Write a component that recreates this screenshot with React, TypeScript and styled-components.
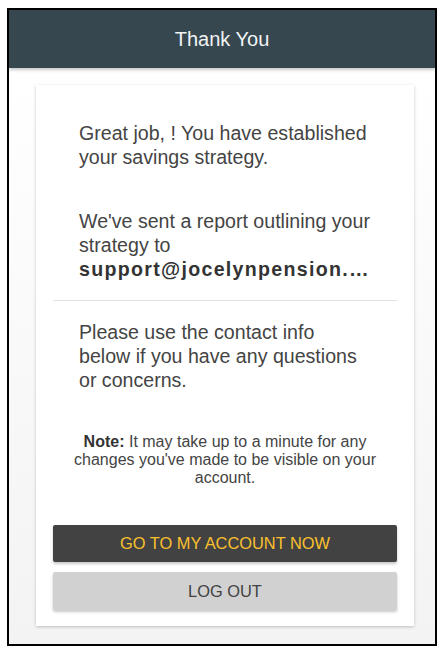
import React from 'react';
import styled, { createGlobalStyle } from 'styled-components';

const GlobalStyle = createGlobalStyle`
  body {
    margin: 0;
    background: #fff;
    font-family: "Liberation Sans", Arial, sans-serif;
  }
`;

const Frame = styled.div`
  box-sizing: border-box;
  width: 430px;
  height: 638px;
  margin: 8px 0 0 7px;
  border: 2px solid #000;
  display: flex;
  flex-direction: column;
  overflow: hidden;
`;

const Header = styled.header`
  position: relative;
  z-index: 1;
  height: 58px;
  flex-shrink: 0;
  display: flex;
  align-items: center;
  justify-content: center;
  background: #37474f;
  color: #f1f3f4;
  font-size: 20px;
  box-shadow: 0 2px 3px rgba(0, 0, 0, 0.22);
`;

const Body = styled.main`
  flex: 1;
  padding: 17px 21px 16px 27px;
  background: linear-gradient(#ffffff, #f3f3f3);
`;

const Card = styled.section`
  background: #fff;
  box-shadow: 0 1px 3px rgba(0, 0, 0, 0.22);
  padding: 36px 17px 16px;
  display: flex;
  flex-direction: column;
`;

const Message = styled.p<{ $gap?: number; $inset?: number }>`
  margin: 0 0 ${(p) => p.$gap ?? 0}px;
  padding: 0 ${(p) => p.$inset ?? 24}px 0 26px;
  font-size: 19.6px;
  line-height: 24px;
  color: #444;
`;

const Email = styled.strong`
  display: block;
  white-space: nowrap;
  overflow: hidden;
  text-overflow: ellipsis;
  color: #333;
  font-weight: bold;
  letter-spacing: 1.3px;
`;

const Divider = styled.hr`
  border: 0;
  border-top: 1px solid #e0e0e0;
  margin: 19px 0 19px;
`;

const Note = styled.p`
  margin: 41px 0 38px;
  padding: 0 16px;
  text-align: center;
  font-size: 16px;
  line-height: 18px;
  color: #444;

  b {
    color: #333;
  }
`;

const Button = styled.button<{ $primary?: boolean }>`
  display: block;
  width: 100%;
  height: 37px;
  border: 0;
  border-radius: 2px;
  font-family: inherit;
  font-size: 16.4px;
  text-transform: uppercase;
  cursor: pointer;
  background: ${(p) => (p.$primary ? '#424242' : '#d1d1d1')};
  color: ${(p) => (p.$primary ? '#fbc02d' : '#424242')};
  box-shadow: 0 2px 3px rgba(0, 0, 0, 0.22);

  & + & {
    margin-top: 10px;
    height: 38px;
  }
`;

export default function App() {
  return (
    <>
      <GlobalStyle />
      <Frame>
        <Header>Thank You</Header>
        <Body>
          <Card>
            <Message $gap={40}>Great job, ! You have established your savings strategy.</Message>
            <Message>
              We've sent a report outlining your strategy to
              <Email>support@jocelynpension.com</Email>
            </Message>
            <Divider />
            <Message $inset={34}>Please use the contact info below if you have any questions or concerns.</Message>
            <Note>
              <b>Note:</b> It may take up to a minute for any changes you've made to be visible on your account.
            </Note>
            <Button $primary>Go to my account now</Button>
            <Button>Log out</Button>
          </Card>
        </Body>
      </Frame>
    </>
  );
}
